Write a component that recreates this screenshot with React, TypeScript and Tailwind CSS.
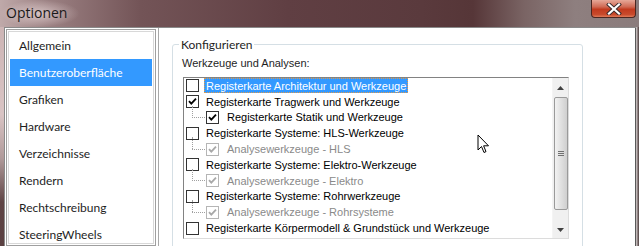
import React from "react";

type Row = { label: string; child?: boolean; checked?: boolean; disabled?: boolean; selected?: boolean };

const rows: Row[] = [
  { label: "Registerkarte Architektur und Werkzeuge", selected: true },
  { label: "Registerkarte Tragwerk und Werkzeuge", checked: true },
  { label: "Registerkarte Statik und Werkzeuge", child: true, checked: true },
  { label: "Registerkarte Systeme: HLS-Werkzeuge" },
  { label: "Analysewerkzeuge - HLS", child: true, checked: true, disabled: true },
  { label: "Registerkarte Systeme: Elektro-Werkzeuge" },
  { label: "Analysewerkzeuge - Elektro", child: true, checked: true, disabled: true },
  { label: "Registerkarte Systeme: Rohrwerkzeuge" },
  { label: "Analysewerkzeuge - Rohrsysteme", child: true, checked: true, disabled: true },
  { label: "Registerkarte Körpermodell & Grundstück und Werkzeuge" },
];

const nav = [
  "Allgemein",
  "Benutzeroberfläche",
  "Grafiken",
  "Hardware",
  "Verzeichnisse",
  "Rendern",
  "Rechtschreibung",
  "SteeringWheels",
];

function Check({ checked, disabled }: { checked?: boolean; disabled?: boolean }) {
  return (
    <div
      className={`w-[13px] h-[13px] shrink-0 border bg-white flex items-center justify-center ${
        disabled ? "border-[#b5b5b5]" : "border-[#333333]"
      }`}
    >
      {checked && (
        <svg width="9" height="9" viewBox="0 0 9 9">
          <path
            d="M1 4.2 L3.3 6.6 L8 1.6"
            fill="none"
            stroke={disabled ? "#a8a8a8" : "#000"}
            strokeWidth="1.8"
          />
        </svg>
      )}
    </div>
  );
}

const uiFont = { fontFamily: 'Lato, "Noto Sans", sans-serif' };

export default function App() {
  return (
    <div
      className="relative w-[639px] h-[246px] overflow-hidden"
      style={{ fontFamily: '"Liberation Sans", Arial, sans-serif' }}
    >
      {/* Title bar */}
      <div className="h-[27px] w-full bg-[linear-gradient(90deg,#bfa9a9_0%,#9a7f81_8%,#735457_22%,#603f43_45%,#5a3a3d_66%,#563638_74%,#7a6464_82%,#8e7f7f_90%,#8a7b7b_100%)] relative">
        <div className="absolute left-0 top-0 w-[80px] h-[27px] bg-[radial-gradient(ellipse_at_center,rgba(255,240,240,0.55)_0%,rgba(255,240,240,0)_70%)]" />
        <div
          className="absolute left-[6px] top-[5px] text-[14px] leading-[16px] text-[#1a1a1a]"
          style={{ fontFamily: '"Open Sans", "Noto Sans", sans-serif' }}
        >
          Optionen
        </div>
        {/* close button */}
        <div className="absolute left-[591px] top-0 w-[45px] h-[18px] rounded-b-[4px] border border-t-0 border-[#4a2620] bg-[linear-gradient(180deg,#e6a898_0%,#d06a54_40%,#c23a1e_55%,#c84a2c_85%,#e07a58_100%)] flex items-center justify-center">
          <svg width="16" height="12" viewBox="0 0 16 12">
            <path d="M3 1.5 L13 10.5 M13 1.5 L3 10.5" stroke="#3a2a2a" strokeWidth="4" strokeLinecap="square" />
            <path d="M3 1.5 L13 10.5 M13 1.5 L3 10.5" stroke="#ffffff" strokeWidth="2.2" strokeLinecap="square" />
          </svg>
        </div>
      </div>

      {/* Frame + client */}
      <div className="flex h-[219px]">
        <div className="w-[4px] bg-[linear-gradient(180deg,#cdb5b5_0%,#d9c4c4_40%,#b09a9a_60%,#5f4445_80%,#5a4041_100%)]" />
        <div className="flex-1 flex bg-white border-t border-l border-[#8a8a8a]">
          {/* left nav panel */}
          <div className="w-[150px] ml-[1px] mt-[1px] border border-[#9f9f9f] bg-white p-[1px]">
            <div className="h-full border border-[#d8d8d8] px-[1px] pt-0">
              {nav.map((n, i) => (
                <div
                  key={n}
                  className={`h-[27px] pl-[9px] flex items-center text-[12px] ${
                    i === 1 ? "bg-[#3399ff] text-white" : "text-[#1e1e1e]"
                  }`}
                  style={uiFont}
                >
                  {n}
                </div>
              ))}
            </div>
          </div>
          {/* content */}
          <div className="flex-1 ml-[2px] border-l border-[#a8a8a8] flex">
            <div className="flex-1 pl-[13px] pt-[16px]">
              <div className="relative w-[411px] h-[220px] border border-[#d5dfe5] rounded-[3px]">
                <div
                  className="absolute left-[6px] top-[-8px] bg-white px-[2px] text-[12px] leading-[15px] text-[#1e1e1e]"
                  style={uiFont}
                >
                  Konfigurieren
                </div>
                <div className="pl-[9px] pt-[11px] text-[11px] leading-[15px] text-[#1e1e1e]">
                  Werkzeuge und Analysen:
                </div>
                {/* list box */}
                <div className="ml-[10px] mt-[6px] w-[386px] h-[162px] border-t border-l border-[#828282] border-r border-b border-r-[#dcdcdc] border-b-[#dcdcdc] flex bg-white">
                  <div className="flex-1 flex flex-col pt-0 overflow-hidden">
                    {rows.map((r, i) => (
                      <div key={i} className="relative h-[15.8px] flex items-center shrink-0">
                        {r.child && (
                          <>
                            <div className="absolute left-[8px] top-[-4px] h-[12px] border-l border-dotted border-[#a0a0a0]" />
                            <div className="absolute left-[8px] top-[7.5px] w-[13px] border-t border-dotted border-[#a0a0a0]" />
                          </>
                        )}
                        <div className={r.child ? "ml-[22px]" : "ml-[2px]"}>
                          <Check checked={r.checked} disabled={r.disabled} />
                        </div>
                        <div
                          className={`whitespace-nowrap text-[11px] leading-[14px] ${
                            r.child ? "ml-[6px]" : "ml-[5px]"
                          } ${
                            r.selected
                              ? "bg-[#3399ff] text-white px-[2px] h-[15px] flex items-center outline-1 outline-dotted outline-[#e09a4a] -outline-offset-1"
                              : r.disabled
                              ? "text-[#8a8a8a] px-[2px]"
                              : "text-black px-[2px]"
                          }`}
                        >
                          {r.label}
                        </div>
                      </div>
                    ))}
                  </div>
                  {/* scrollbar */}
                  <div className="w-[16px] bg-[#f0f0f0] flex flex-col items-center border-l border-[#f4f4f4]">
                    <div className="h-[19px] w-full flex items-center justify-center">
                      <svg width="7" height="4" viewBox="0 0 7 4">
                        <path d="M0 4 L3.5 0 L7 4 Z" fill="#404040" />
                      </svg>
                    </div>
                    <div className="w-[14px] h-[113px] rounded-[2px] border border-[#9a9a9a] bg-[linear-gradient(90deg,#f2f2f2_0%,#e2e2e2_45%,#cfcfcf_100%)] flex items-center justify-center">
                      <div className="flex flex-col gap-[1px]">
                        <div className="w-[6px] h-[1px] bg-[#707070]" />
                        <div className="w-[6px] h-[1px] bg-[#707070]" />
                        <div className="w-[6px] h-[1px] bg-[#707070]" />
                      </div>
                    </div>
                    <div className="flex-1" />
                    <div className="h-[17px] w-full flex items-center justify-center">
                      <svg width="7" height="4" viewBox="0 0 7 4">
                        <path d="M0 0 L3.5 4 L7 0 Z" fill="#404040" />
                      </svg>
                    </div>
                  </div>
                </div>
              </div>
            </div>
            {/* right frame inside */}
            <div className="w-[1px] bg-[#5a5a5a]" />
          </div>
        </div>
        <div className="w-[3px] bg-[linear-gradient(90deg,#d8d0d0,#4a3a3a)]" />
      </div>

      {/* mouse cursor */}
      <svg className="absolute left-[477px] top-[134px]" width="13" height="21" viewBox="0 0 13 21">
        <path
          d="M1 1 L1 16 L4.5 12.5 L7 18.5 L9 17.6 L6.6 11.8 L11.5 11.8 Z"
          fill="#ffffff"
          stroke="#000"
          strokeWidth="1"
          strokeLinejoin="miter"
        />
      </svg>
    </div>
  );
}
